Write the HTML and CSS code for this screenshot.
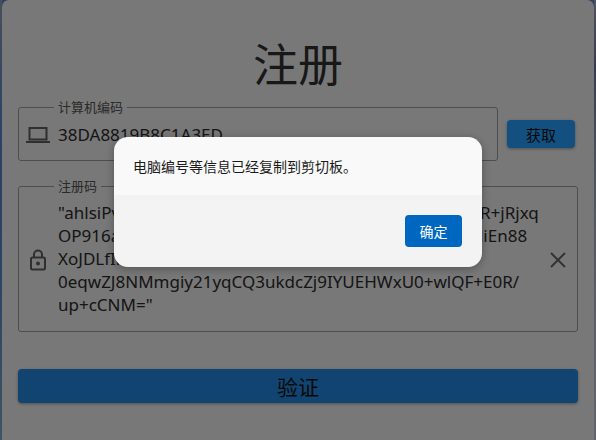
FILE: index.html
```html
<!DOCTYPE html>
<html lang="zh">
<head>
<meta charset="utf-8">
<title>注册</title>
<link rel="stylesheet" href="styles.css">
</head>
<body>
<main class="window">
  <h1 class="title">注册</h1>
  <div class="row">
    <fieldset class="field field-machine">
      <legend>计算机编码</legend>
      <div class="field-body">
        <svg class="icon" viewBox="0 0 24 24" width="24" height="24"><path d="M3.500 6h17v11.500h-17z M0 20h24" fill="none" stroke="currentColor" stroke-width="2"/></svg>
        <span class="value">38DA8819B8C1A3ED</span>
      </div>
    </fieldset>
    <button class="btn btn-get">获取</button>
  </div>
  <fieldset class="field field-code">
    <legend>注册码</legend>
    <div class="field-body">
      <svg class="icon lock" viewBox="0 0 24 24" width="24" height="24"><path d="M6.500 9.500h11a1.500 1.500 0 0 1 1.500 1.500v9a1.500 1.500 0 0 1-1.500 1.500h-11A1.500 1.500 0 0 1 5 20v-9A1.500 1.500 0 0 1 6.500 9.500z M8 9.500V6.500a4 4 0 0 1 8 0v3" fill="none" stroke="currentColor" stroke-width="2"/><circle cx="12" cy="15.500" r="2" fill="currentColor"/></svg>
      <div class="value code">"ahlsiPvQ7mKdT2sWnY8eUbXc4RfLgH1oJzA6pVtMw3R+jRjxq<br>OP916aDs7LxVcH2nTgK4uYfW8mQbZe1RoJp3IiSt6AyliEn88<br>XoJDLfIh3TWP7sMzEa2YbN6cGwU9rKvO1d<br>0eqwZJ8NMmgiy21yqCQ3ukdcZj9IYUEHWxU0+wlQF+E0R/<br>up+cCNM="</div>
      <svg class="icon clear" viewBox="0 0 24 24" width="24" height="24"><path d="M5 5l14 14M19 5L5 19" fill="none" stroke="currentColor" stroke-width="2"/></svg>
    </div>
  </fieldset>
  <button class="btn btn-verify">验证</button>
</main>
<div class="scrim">
  <div class="dialog">
    <div class="dialog-body">电脑编号等信息已经复制到剪切板。</div>
    <div class="dialog-foot"><button class="btn-ok">确定</button></div>
  </div>
</div>
</body>
</html>
```

FILE: styles.css
```css
* { box-sizing: border-box; }
html, body { margin: 0; height: 100%; }
body {
  width: 596px;
  height: 440px;
  overflow: hidden;
  background-color: #5b86c8;
  background-image:
    linear-gradient(180deg, #8ca0b8 0%, #5a84cc 30%, #5686c8 60%, #7ea8c8 100%),
    linear-gradient(180deg, #a0a8b8 0%, #6c78a8 15%, #98a8c0 40%, #c0cedc 100%);
  background-size: 2px 100%, 2px 100%;
  background-position: left top, right top;
  background-repeat: no-repeat;
  font-family: "Noto Sans", "Noto Sans CJK SC", sans-serif;
  color: #1c1c1c;
}
.window {
  margin: 0 2px;
  height: 440px;
  padding: 31px 16px 0;
  background: #f0f0f0;
  border-radius: 7px 7px 0 0;
  display: flex;
  flex-direction: column;
}
.title {
  margin: 0 0 4px;
  font: 400 45px/64px "Noto Sans CJK SC", sans-serif;
  text-align: center;
  color: #303030;
}
.row {
  display: flex;
  align-items: center;
  gap: 9px;
  padding-right: 3px;
}
.field {
  margin: 0;
  min-width: 0;
  padding: 0 7px;
  border: 1px solid #9c9c9c;
  border-radius: 3px;
}
.field legend {
  margin-left: 28px;
  padding: 0 4px;
  font: 13px/16px "Noto Sans CJK SC", sans-serif;
  color: #555;
}
.field-machine { flex: 1; height: 62px; }
.field-code { height: 154px; margin-top: 17px; }
.field-body { display: flex; align-items: center; height: 100%; gap: 8px; color: #1c1c1c; }
.field-machine .field-body { height: 38px; }
.field-code .field-body { height: 130px; margin-top: -1px; }
.icon { flex: none; color: #5f5f5f; }
.lock { margin-top: 3px; }
.value { font-size: 17px; line-height: 23px; white-space: nowrap; color: #2a2a2a; }
.code { flex: 1; overflow: hidden; }
.clear { color: #666; margin-top: 4px; }
.btn {
  border: 0;
  border-radius: 4px;
  background: #2288e0;
  color: #111;
  font-family: "Noto Sans CJK SC", sans-serif;
  box-shadow: 0 1px 3px rgba(0, 0, 0, .35);
  padding: 0;
}
.btn-get { flex: none; width: 68px; height: 28px; margin-top: 8px; font-size: 15px; background: #26a0fe; }
.btn-verify { height: 34px; margin-top: 37px; font-size: 21px; }
.scrim {
  position: absolute;
  inset: 0;
  background: rgba(0, 0, 0, .5);
}
.dialog {
  position: absolute;
  left: 114px;
  top: 137px;
  width: 368px;
  height: 130px;
  border-radius: 14px;
  overflow: hidden;
  display: flex;
  flex-direction: column;
  box-shadow: 0 2px 8px rgba(0, 0, 0, .3);
}
.dialog-body {
  height: 58px;
  padding: 19px 19px 0;
  background: #f9f9f9;
  font: 14px/20px "Noto Sans CJK SC", sans-serif;
  color: #1b1b1b;
}
.dialog-foot {
  flex: 1;
  background: #f3f3f3;
  display: flex;
  justify-content: flex-end;
  align-items: flex-start;
  padding: 20px 20px 0 0;
}
.btn-ok {
  width: 57px;
  height: 32px;
  border: 0;
  padding: 0;
  border-radius: 4px;
  background: #0067c0;
  color: #fff;
  font: 400 14px "Noto Sans CJK SC", sans-serif;
}
```
